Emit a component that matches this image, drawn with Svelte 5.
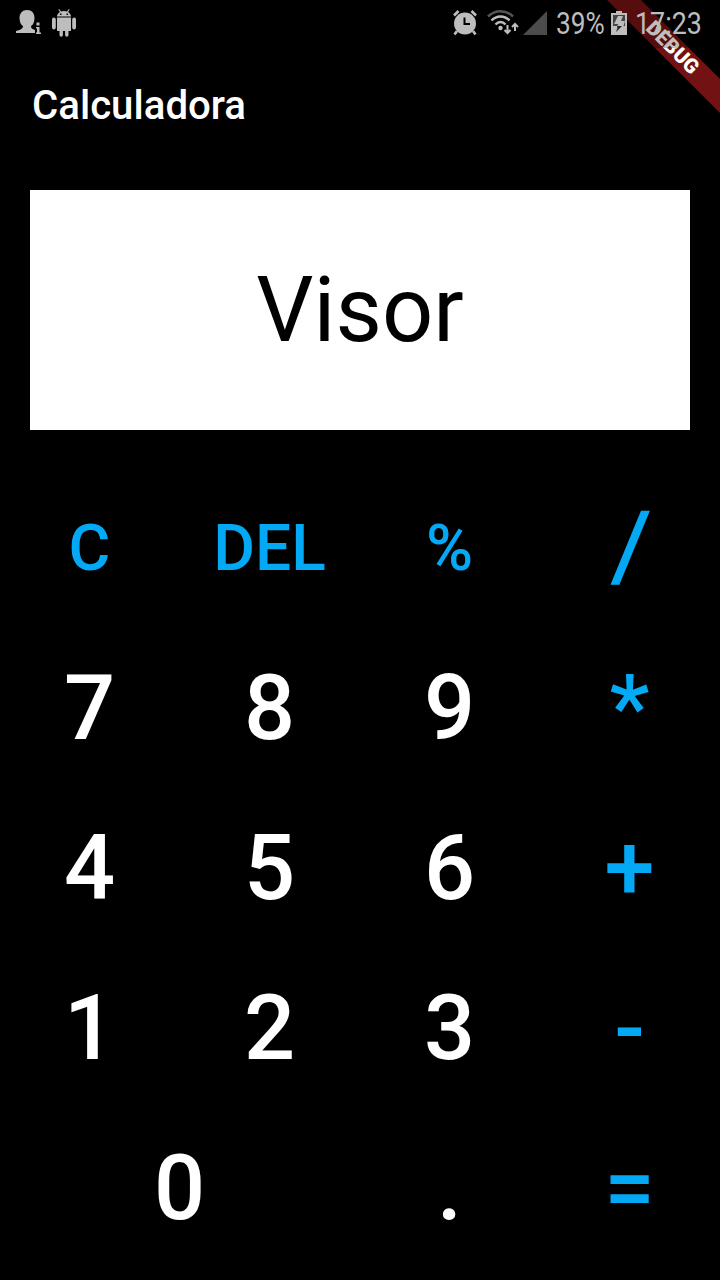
<script>
  const rows = [['7','8','9','*'],['4','5','6','+'],['1','2','3','-']];
</script>

<div class="screen">
  <header>Calculadora</header>
  <div class="display">Visor</div>
  <main>
    <div class="row fn"><button>C</button><button>DEL</button><button>%</button><button class="slash">/</button></div>
    {#each rows as row}
      <div class="row">{#each row as k, i}<button class:op={i === 3}>{k}</button>{/each}</div>
    {/each}
    <div class="row"><button class="wide">0</button><button>.</button><button class="op">=</button></div>
  </main>
  <div class="corner"><div class="banner">DEBUG</div></div>
  <div class="status">
    <svg class="user" width="26" height="26" viewBox="0 0 26 26"><path fill="#bdbdbd" d="M11 0c5 0 7.500 3.500 7.500 8 0 4-1.500 7-3.500 8 0 2.500 1 3 4 4v3H0v-2c3-1 7-1.500 7-5-2-1-3.500-4-3.500-8 0-4.500 3-8 7.500-8z"/><path fill="#bdbdbd" d="M20.500 12.500h3v3h-3zM20 17h3.500v5.500H25V24h-5v-1.500h1v-4h-1z"/></svg>
    <svg class="android" width="24" height="28" viewBox="0 0 24 28"><path fill="#bdbdbd" d="M5 7.500C5 5.500 6.500 4 8 3L6.300.6 7.200 0 9 2.500c2-.7 4-.7 6 0L16.800 0l.9.600L16 3c1.500 1 3 2.500 3 4.500zM5 8.500h14V22h-2.500v4a1.700 1.700 0 0 1-3.400 0v-4h-2.200v4a1.700 1.700 0 0 1-3.400 0v-4H5zM0 10.500a1.900 1.900 0 0 1 3.800 0v8a1.900 1.900 0 0 1-3.800 0zM20.200 10.500a1.900 1.900 0 0 1 3.800 0v8a1.900 1.900 0 0 1-3.800 0z"/><path fill="#000" d="M8 4.500h1.500V6H8zM14.500 4.500H16V6h-1.500z"/></svg>
    <svg class="alarm" width="26" height="26" viewBox="0 0 26 26"><circle cx="13" cy="13.500" r="11" fill="#bdbdbd"/><path fill="none" stroke="#bdbdbd" stroke-width="2.700" d="M2 5.500 6.500 1M19.500 1 24 5.500M5 21l-2.500 3.500M21 21l2.500 3.500"/><path fill="none" stroke="#000" stroke-width="2" d="M12.500 7.500V14H18"/></svg>
    <svg class="wifi" width="32" height="26" viewBox="0 0 32 26"><g fill="none" stroke-width="2.500"><path stroke="#555" d="M1 6.500C8-.5 19-.5 26 6.500"/><path stroke="#bdbdbd" d="M4.500 10.500c5-5.500 13-5.500 18 0M8.500 14.500c3-3.500 7-3.500 10 0"/></g><circle cx="13.500" cy="18" r="2.200" fill="#bdbdbd"/><path fill="none" stroke="#bdbdbd" stroke-width="2" d="M20.500 15v8M17.500 20l3 3 3-3M28 21v-7M25 17l3-3 3 3"/></svg>
    <svg class="signal" width="24" height="24" viewBox="0 0 24 24"><path fill="#4c4c4c" d="M24 0v24H0z"/></svg>
    <span class="percent">39%</span>
    <svg class="battery" width="16" height="24" viewBox="0 0 16 24"><path fill="#bdbdbd" d="M5 0h6v2h5v22H0V2h5z"/><path fill="#444" d="M2 4h12v11H2z"/><path fill="#bdbdbd" d="m7 5-4 8h4.500L6 15h6.500l1.500-5h-4L12 5z"/><path fill="#222" d="M6 15h5l-6 6 1.500-4z"/></svg>
    <span class="clock">17:23</span>
  </div>
</div>

<style>
  :global(body) { background: #000; }
  .screen { position: relative; width: 720px; height: 1280px; overflow: hidden; background: #000; color: #fff; font-family: Roboto, sans-serif; display: flex; flex-direction: column; padding-top: 48px; box-sizing: border-box; }
  .status { position: absolute; top: 0; left: 0; width: 720px; height: 48px; display: flex; align-items: center; padding-left: 16px; box-sizing: border-box; color: #bdbdbd; font-size: 30.5px; background: rgba(0,0,0,.25); }
  .status svg { flex: none; margin-bottom: 2px; }
  .android { margin-left: 10px; }
  .alarm { margin-left: 376px; }
  .wifi { margin-left: 9px; }
  .signal { margin-left: 4px; }
  .percent, .clock { transform: scaleX(.86); transform-origin: left; white-space: nowrap; line-height: 46px; }
  .percent { width: 48px; margin-left: 9px; }
  .battery { margin-left: 7px; }
  .clock { width: 66px; margin-left: 8px; transform: scaleX(.88); }
  header { height: 112px; box-sizing: border-box; padding-left: 32px; line-height: 116px; font-size: 40.2px; font-weight: 500; }
  .display { margin: 30px; height: 240px; background: #fff; color: #000; display: flex; align-items: center; justify-content: center; font-size: 90px; }
  main { display: flex; flex-direction: column; padding-top: 8px; }
  .row { height: 160px; display: grid; grid-template-columns: repeat(4, 180px); }
  button { border: 0; padding: 0 1px 0 0; background: none; color: #fff; font: 500 90px Roboto, sans-serif; }
  .wide { grid-column: span 2; }
  .fn button, .op { color: #03a9f4; }
  .fn button { font-size: 64px; }
  .fn .slash { font-size: 96px; padding: 0 0 4px 2px; transform: skewX(-3deg); }
  .corner { position: absolute; top: 0; right: 0; width: 160px; height: 160px; overflow: hidden; }
  .banner { position: absolute; left: 12px; top: 36px; width: 200px; height: 24px; transform: rotate(45deg); background: #731212; color: #fff; font-size: 20.4px; line-height: 23px; font-weight: 900; text-align: center; }
</style>
